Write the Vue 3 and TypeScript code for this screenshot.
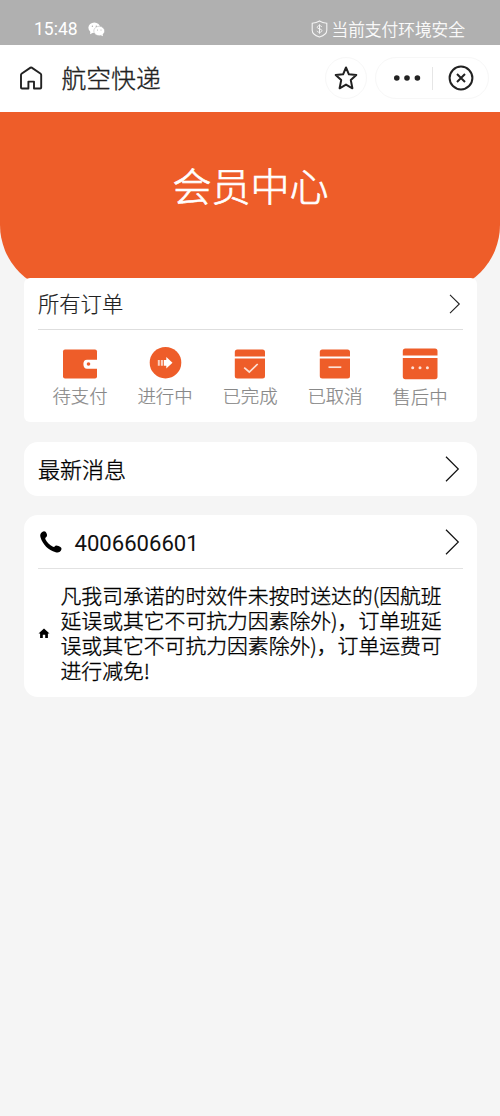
<script setup lang="ts">
type OrderIcon = 'wallet' | 'progress' | 'done' | 'cancel' | 'service'

interface OrderState {
  label: string
  icon: OrderIcon
}

const orderStates: OrderState[] = [
  { label: '待支付', icon: 'wallet' },
  { label: '进行中', icon: 'progress' },
  { label: '已完成', icon: 'done' },
  { label: '已取消', icon: 'cancel' },
  { label: '售后中', icon: 'service' },
]

const notice: string =
  '凡我司承诺的时效件未按时送达的(因航班\n' +
  '延误或其它不可抗力因素除外)，订单班延\n' +
  '误或其它不可抗力因素除外)，订单运费可\n' +
  '进行减免!'
</script>

<template>
  <div class="page">
    <div class="status">
      <span class="time">15:48</span>
      <svg class="wechat" width="17" height="15" viewBox="0 0 17 15">
        <ellipse cx="6.3" cy="5.7" rx="5.9" ry="5.2" fill="#fff" />
        <path d="M2.5 9 L2 12.3 L5.5 10.6Z" fill="#fff" />
        <ellipse cx="11.2" cy="9" rx="5.4" ry="4.7" fill="#fff" stroke="#b0b0b0" stroke-width=".5" />
        <path d="M12.5 13 L15 14.3 L14.6 12Z" fill="#fff" />
        <g fill="#b0b0b0">
          <circle cx="4.4" cy="4.2" r=".7" />
          <circle cx="8.3" cy="4.2" r=".7" />
          <circle cx="9.5" cy="8" r=".55" />
          <circle cx="13" cy="8" r=".55" />
        </g>
      </svg>
      <div class="safe">
        <svg width="17" height="18" viewBox="0 0 17 18" fill="none" stroke="#f4f4f4">
          <path d="M8.5 1 C6.3 2.4 3.8 3 1.2 3.2 V10.3 C1.2 13.6 4.3 15.7 8.5 17 C12.7 15.7 15.8 13.6 15.8 10.3 V3.2 C13.2 3 10.7 2.4 8.5 1Z" stroke-width="1.1" />
          <path d="M10.8 7 C10.4 6 9.6 5.7 8.5 5.7 C7.1 5.7 6.2 6.3 6.2 7.3 C6.2 9.5 10.9 8.3 10.9 10.6 C10.9 11.7 9.9 12.3 8.5 12.3 C7.2 12.3 6.3 11.8 6 10.8 M8.5 4.3 V13.7" stroke-width="1" />
        </svg>
        <span>当前支付环境安全</span>
      </div>
    </div>

    <header class="nav">
      <svg class="home" width="24" height="26" viewBox="0 0 24 26" fill="none" stroke="#222" stroke-width="1.9" stroke-linejoin="round">
        <path d="M9.4 23.5 H3 Q2 23.5 2 22.5 V9.9 Q2 9.3 2.5 8.8 L11.5 2.6 Q12.1 2.2 12.7 2.6 L21.7 8.8 Q22.2 9.3 22.2 9.9 V22.5 Q22.2 23.5 21.2 23.5 H15 V16.6 H9.4 Z" />
      </svg>
      <span class="title">航空快递</span>
      <div class="star">
        <svg width="24" height="24" viewBox="0 0 24 24" fill="none" stroke="#222" stroke-width="2" stroke-linejoin="round">
          <path d="M12 1.5 L14.9 8.3 L22.3 9 L16.8 14.1 L18.4 22.3 L12 18.6 L5.6 22.3 L7.2 14.1 L1.7 9 L9.1 8.3Z" />
        </svg>
      </div>
      <div class="capsule">
        <svg width="28" height="8" viewBox="0 0 28 8" fill="#222">
          <circle cx="3.8" cy="4" r="2.8" />
          <circle cx="14" cy="4" r="2.8" />
          <circle cx="24.4" cy="4" r="2.8" />
        </svg>
        <i></i>
        <svg width="26" height="26" viewBox="0 0 26 26" fill="none" stroke="#222" stroke-width="2">
          <circle cx="13" cy="13" r="11.4" />
          <path d="M9 9 L17 17 M17 9 L9 17" />
        </svg>
      </div>
    </header>

    <section class="hero"><h1>会员中心</h1></section>

    <main>
      <section class="card orders">
        <div class="row">
          <span>所有订单</span>
          <svg width="12" height="20" viewBox="0 0 12 20" fill="none" stroke="#222" stroke-width="1.1">
            <path d="M1 .8 L10.3 10 L1 19.2" />
          </svg>
        </div>
        <ul>
          <li v-for="state in orderStates" :key="state.icon" :class="state.icon">
            <svg width="36" height="34" viewBox="0 0 36 34">
              <template v-if="state.icon === 'wallet'">
                <rect x="1" y="3.5" width="34" height="29" rx="2" fill="#ee5d29" />
                <path d="M36 13.7 H25 Q21.4 13.7 21.4 18 Q21.4 22.8 25 22.8 H36Z" fill="#fff" />
                <circle cx="26.5" cy="18" r="1.8" fill="#ee5d29" />
              </template>
              <template v-else-if="state.icon === 'progress'">
                <circle cx="18.5" cy="16.7" r="15.8" fill="#ee5d29" />
                <path d="M16.8 14 H19.3 V11 L25.5 16.8 L19.3 22.5 V19.7 H16.8Z" fill="#fff" />
                <path d="M13.8 14 H15.9 V19.7 H13.8Z M10.8 14 H12.8 V19.7 H10.8Z" fill="#fbd3c4" />
              </template>
              <template v-else-if="state.icon === 'service'">
                <path d="M.8 9.5 V5 Q.8 2.4 3.3 2.4 H33 Q35.5 2.4 35.5 5 V9.5Z M.8 12 H35.5 V30.5 Q35.5 33.2 33 33.2 H3.3 Q.8 33.2 .8 30.5Z" fill="#ee5d29" />
                <g fill="#fde0d5">
                  <circle cx="10.7" cy="21.7" r="1.5" />
                  <circle cx="18" cy="21.7" r="1.5" />
                  <circle cx="25.4" cy="21.7" r="1.5" />
                </g>
              </template>
              <template v-else>
                <path d="M2.8 10.6 V6 Q2.8 3.5 5.3 3.5 H30.5 Q33 3.5 33 6 V10.6Z M2.8 12.4 H33 V30 Q33 32.5 30.5 32.5 H5.3 Q2.8 32.5 2.8 30Z" fill="#ee5d29" />
                <path v-if="state.icon === 'done'" d="M12.2 21.6 L17.3 26 L25.7 18" fill="none" stroke="#fde0d5" stroke-width="1.7" />
                <path v-else d="M11.5 21.2 H24.3" stroke="#fde0d5" stroke-width="1.7" />
              </template>
            </svg>
            <span>{{ state.label }}</span>
          </li>
        </ul>
      </section>

      <section class="card news">
        <span>最新消息</span>
        <svg class="arrow" width="15" height="26" viewBox="0 0 15 26" fill="none" stroke="#111" stroke-width="1.2">
          <path d="M1 .8 L13.3 13 L1 25.2" />
        </svg>
      </section>

      <section class="card contact">
        <div class="phone">
          <svg width="24" height="24" viewBox="0 0 24 24">
            <path d="M3.2 2 C5.3 .6 6.8 1.6 7.5 3.3 C8.4 5.2 8.2 6.5 6.7 7.6 C6.2 8 6.1 8.6 6.4 9.2 C8 12.5 10.5 15 14 16.8 C14.7 17.1 15.2 17 15.6 16.4 C16.5 15.2 17.8 15.3 19.5 16 C21.8 16.9 22.9 17.7 22.4 19.5 C21.7 21.9 19.4 23.1 16.7 22.3 C9.2 20 3.7 14.6 1.5 7.3 C.8 5 1.4 3.2 3.2 2Z" fill="#000" />
          </svg>
          <span>4006606601</span>
          <svg class="arrow" width="15" height="26" viewBox="0 0 15 26" fill="none" stroke="#111" stroke-width="1.2">
            <path d="M1 .8 L13.3 13 L1 25.2" />
          </svg>
        </div>
        <div class="notice">
          <svg width="12" height="11" viewBox="0 0 12 11">
            <path d="M6 .5 L11.5 5.5 H9.9 V10.1 H7.2 V6.8 H4.8 V10.1 H2.1 V5.5 H.5Z" fill="#000" />
          </svg>
          <p>{{ notice }}</p>
        </div>
      </section>
    </main>
  </div>
</template>

<style>
body {
  margin: 0;
  background: #f5f5f5;
}
</style>

<style scoped>
.page {
  box-sizing: border-box;
  width: 500px;
  height: 1116px;
  overflow: hidden;
  background: #f5f5f5;
  font-family: 'Noto Sans CJK SC', sans-serif;
  font-weight: 300;
  color: #111;
}
svg {
  display: block;
  flex: none;
}
span {
  white-space: nowrap;
}
.status {
  box-sizing: border-box;
  height: 45px;
  padding: 16px 35px 0 34px;
  display: flex;
  align-items: flex-start;
  background: #b0b0b0;
  color: #fff;
  line-height: 27px;
}
.time {
  width: 54px;
  font-family: Roboto, sans-serif;
  font-size: 17.5px;
  font-weight: 400;
}
.wechat {
  margin-top: 6px;
}
.safe {
  margin-left: auto;
  display: flex;
  gap: 4px;
  font-size: 16.7px;
  -webkit-text-stroke: 0.25px currentColor;
}
.safe svg {
  margin-top: 4px;
}
.nav {
  box-sizing: border-box;
  height: 67px;
  padding: 0 11px 1px 19px;
  display: flex;
  align-items: center;
  background: #fff;
}
.title {
  margin: -3px 0 0 18.5px;
  font-size: 24.8px;
  line-height: 36px;
  color: #222;
  -webkit-text-stroke: 0.35px currentColor;
}
.star {
  box-sizing: border-box;
  width: 42px;
  height: 42px;
  margin-left: auto;
  border: 1px solid #f7f7f7;
  border-radius: 50%;
  display: grid;
  place-items: center;
}
.capsule {
  box-sizing: border-box;
  width: 114px;
  height: 42px;
  margin-left: 8px;
  padding: 0 14px 0 17px;
  border: 1px solid #f7f7f7;
  border-radius: 21px;
  display: flex;
  align-items: center;
}
.capsule i {
  width: 1px;
  height: 23px;
  margin: 0 15px 0 11px;
  background: #e6e6e6;
}
.hero {
  box-sizing: border-box;
  height: 180px;
  padding: 43px 0 0 1px;
  border-radius: 0 0 67px 67px;
  background: #ee5d29;
}
h1 {
  margin: 0;
  font-size: 39px;
  line-height: 58px;
  font-weight: 300;
  text-align: center;
  color: #fff;
  -webkit-text-stroke: 0.7px currentColor;
}
main {
  margin: -14px 23.5px 0 24px;
  display: flex;
  flex-direction: column;
}
.card {
  box-sizing: border-box;
  background: #fff;
  border-radius: 14px;
}
.orders {
  height: 144px;
  padding: 0 14px;
  border-radius: 6px;
}
.row {
  height: 51px;
  display: flex;
  align-items: center;
  justify-content: space-between;
  border-bottom: 1.5px solid #dedede;
  font-size: 21.3px;
  color: #222;
  -webkit-text-stroke: 0.2px currentColor;
}
.row span {
  margin-top: -2px;
}
.row svg {
  margin-right: 2px;
}
ul {
  list-style: none;
  margin: 0 0 0 -1px;
  padding: 16px 0 0;
  display: grid;
  grid-template-columns: repeat(5, 85px);
}
li {
  display: flex;
  flex-direction: column;
  align-items: center;
}
li span {
  padding-left: 1px;
  font-size: 18.4px;
  line-height: 30px;
  color: #888;
  -webkit-text-stroke: 0.2px currentColor;
}
li.service span {
  margin-top: 1px;
}
.news {
  height: 54px;
  margin-top: 20px;
  padding: 0 17px 0 14px;
  display: flex;
  align-items: center;
  justify-content: space-between;
  font-size: 22px;
  color: #000;
  -webkit-text-stroke: 0.35px currentColor;
}
.news span {
  margin-top: -3px;
}
.contact {
  height: 182px;
  margin-top: 19px;
  padding: 0 14px;
}
.phone {
  height: 53px;
  display: flex;
  align-items: center;
  border-bottom: 1px solid #e2e2e2;
  font-family: Roboto, sans-serif;
  font-size: 22.1px;
  font-weight: 400;
}
.phone span {
  margin-top: 2px;
}
.phone > svg:first-child {
  margin: 0 11.5px 0 1px;
}
.phone .arrow {
  margin: 0 3px 0 auto;
}
.notice {
  display: flex;
  align-items: center;
  padding-top: 14px;
}
.notice svg {
  margin-right: 10.5px;
}
p {
  margin: 0;
  font-size: 20.82px;
  line-height: 25px;
  white-space: pre;
  color: #000;
  -webkit-text-stroke: 0.35px currentColor;
}
</style>
